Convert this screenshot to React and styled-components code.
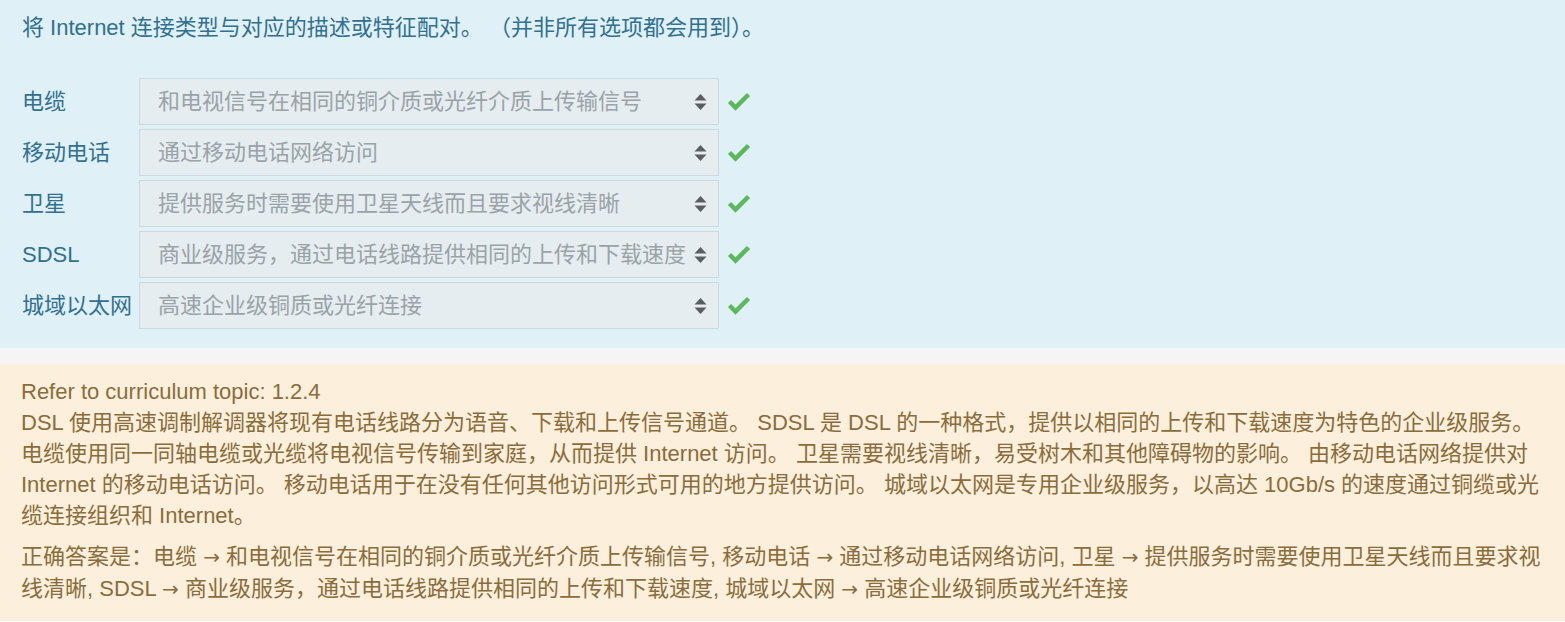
import React from 'react';
import styled, { createGlobalStyle } from 'styled-components';

const GlobalStyle = createGlobalStyle`
  html, body {
    margin: 0;
    padding: 0;
    background: #ffffff;
  }
  body {
    font-family: "Liberation Sans", Arial, "Noto Sans CJK SC", sans-serif;
    font-size: 22px;
    line-height: 31px;
  }
`;

const Page = styled.div`
  width: 1565px;
  display: flex;
  flex-direction: column;
`;

const Question = styled.section`
  background: #dff0f7;
  color: #31708f;
  padding: 12px 22px 19px 22px;
`;

const Title = styled.div`
  margin-bottom: 35px;
`;

const MatchList = styled.div`
  display: flex;
  flex-direction: column;
  gap: 4px;
`;

const Row = styled.div`
  display: flex;
  align-items: center;
  height: 47px;
`;

const Label = styled.div`
  width: 117px;
  flex: none;
  white-space: nowrap;
`;

const Select = styled.div`
  box-sizing: border-box;
  width: 580px;
  height: 47px;
  display: flex;
  align-items: center;
  background: #e5edf0;
  border: 1px solid #cdd9de;
  color: #9aa3a7;
  padding: 0 11px 0 18px;
  overflow: hidden;
`;

const SelectText = styled.span`
  flex: 1;
  white-space: nowrap;
  overflow: hidden;
`;

const Arrows = styled.svg`
  flex: none;
  margin-left: 2px;
`;

const Check = styled.svg`
  flex: none;
  margin-left: 8px;
`;

const Divider = styled.div`
  height: 16px;
  background: #f5f5f5;
`;

const Feedback = styled.section`
  background: #fcefdc;
  color: #8a6d3b;
  padding: 12px 20px 16px 21px;
`;

const Para = styled.p`
  margin: 0 0 ${(p) => (p.$gap ? '10px' : '0')} 0;
`;

const Arrow = styled.span`
  font-family: "DejaVu Sans", sans-serif;
  font-size: 20px;
`;

const rows = [
  ['电缆', '和电视信号在相同的铜介质或光纤介质上传输信号'],
  ['移动电话', '通过移动电话网络访问'],
  ['卫星', '提供服务时需要使用卫星天线而且要求视线清晰'],
  ['SDSL', '商业级服务，通过电话线路提供相同的上传和下载速度'],
  ['城域以太网', '高速企业级铜质或光纤连接'],
];

const SortIcon = () => (
  <Arrows width="13" height="18" viewBox="0 0 13 18">
    <polygon points="6.5,1 12.5,7.5 0.5,7.5" fill="#5a5e60" />
    <polygon points="0.5,10.5 12.5,10.5 6.5,17" fill="#5a5e60" />
  </Arrows>
);

const CheckIcon = () => (
  <Check width="24" height="19" viewBox="0 0 24 19">
    <polyline
      points="2.5,9.5 8.5,15.5 21.5,2.5"
      fill="none"
      stroke="#5cb85c"
      strokeWidth="4.5"
      strokeLinecap="butt"
      strokeLinejoin="miter"
    />
  </Check>
);

export default function App() {
  return (
    <Page>
      <GlobalStyle />
      <Question>
        <Title>将 Internet 连接类型与对应的描述或特征配对。 （并非所有选项都会用到）。</Title>
        <MatchList>
          {rows.map(([label, value]) => (
            <Row key={label}>
              <Label>{label}</Label>
              <Select>
                <SelectText>{value}</SelectText>
                <SortIcon />
              </Select>
              <CheckIcon />
            </Row>
          ))}
        </MatchList>
      </Question>
      <Divider />
      <Feedback>
        <Para>Refer to curriculum topic: 1.2.4</Para>
        <Para $gap>
          DSL 使用高速调制解调器将现有电话线路分为语音、下载和上传信号通道。 SDSL 是 DSL 的一种格式，提供以相同的上传和下载速度为特色的企业级服务。 电缆使用同一同轴电缆或光缆将电视信号传输到家庭，从而提供 Internet 访问。 卫星需要视线清晰，易受树木和其他障碍物的影响。 由移动电话网络提供对 Internet 的移动电话访问。 移动电话用于在没有任何其他访问形式可用的地方提供访问。 城域以太网是专用企业级服务，以高达 10Gb/s 的速度通过铜缆或光缆连接组织和 Internet。
        </Para>
        <Para>
          正确答案是：
          {rows.map(([label, value], i) => (
            <React.Fragment key={label}>
              {label} <Arrow>→</Arrow> {value}
              {i < rows.length - 1 ? ', ' : ''}
            </React.Fragment>
          ))}
        </Para>
      </Feedback>
    </Page>
  );
}
